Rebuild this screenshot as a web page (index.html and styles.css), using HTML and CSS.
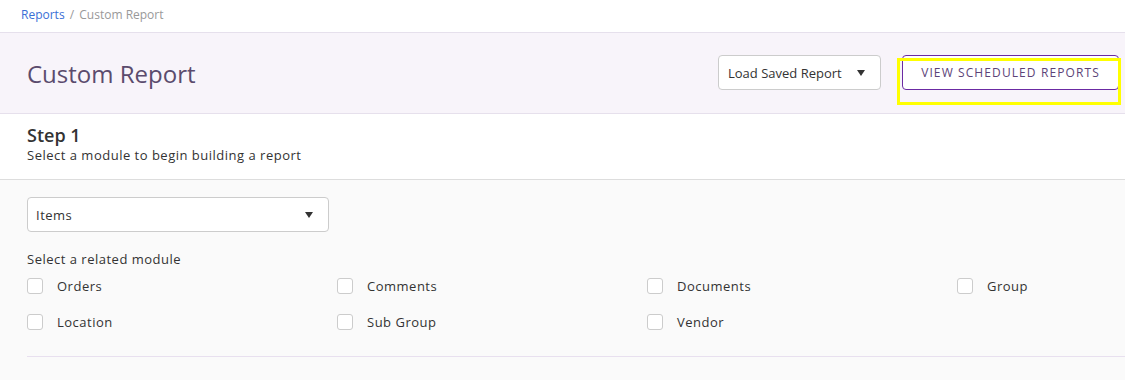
FILE: index.html
```html
<!DOCTYPE html>
<html lang="en">
<head>
    <meta charset="UTF-8">
    <title>Custom Report</title>
    <link rel="stylesheet" href="styles.css">
</head>
<body>
    <div class="breadcrumb">
        <a href="#">Reports</a>
        <span class="sep">/</span>
        <span class="current">Custom Report</span>
    </div>

    <div class="page-header">
        <h1>Custom Report</h1>
        <div class="header-actions">
            <div class="select select-saved">
                <span>Load Saved Report</span>
                <span class="caret"></span>
            </div>
            <div class="highlight-wrap">
                <button class="btn-outline">VIEW SCHEDULED REPORTS</button>
                <div class="highlight"></div>
            </div>
        </div>
    </div>

    <div class="step-head">
        <h2>Step 1</h2>
        <p>Select a module to begin building a report</p>
    </div>

    <div class="step-body">
        <div class="select select-module">
            <span>Items</span>
            <span class="caret"></span>
        </div>

        <div class="related-label">Select a related module</div>
        <div class="modules">
            <label class="check"><span class="box"></span>Orders</label>
            <label class="check"><span class="box"></span>Comments</label>
            <label class="check"><span class="box"></span>Documents</label>
            <label class="check"><span class="box"></span>Group</label>
            <label class="check"><span class="box"></span>Location</label>
            <label class="check"><span class="box"></span>Sub Group</label>
            <label class="check"><span class="box"></span>Vendor</label>
        </div>
        <div class="divider"></div>
    </div>
</body>
</html>
```

FILE: styles.css
```css
body {
    margin: 0;
    font-family: "Open Sans", sans-serif;
    color: #333;
    background-color: #fafafa;
}
.breadcrumb {
    height: 32px;
    padding-left: 21px;
    font-size: 12px;
    line-height: 29px;
    background-color: #fff;
}
.breadcrumb a {
    color: #3a6fd6;
    text-decoration: none;
}
.breadcrumb .sep {
    color: #999;
    margin: 0 2px;
}
.breadcrumb .current {
    color: #999;
}
.page-header {
    height: 80px;
    display: flex;
    align-items: center;
    justify-content: space-between;
    padding: 0 6px 0 27px;
    background-color: #f8f4fa;
    border-top: 1px solid #e6e0ec;
    border-bottom: 1px solid #e6e0ec;
}
.page-header h1 {
    margin: 0;
    font-size: 24px;
    font-weight: 400;
    color: #5b4b6d;
    padding-top: 1px;
}
.header-actions {
    display: flex;
    align-items: center;
    gap: 21px;
    margin-top: -1px;
}
.select {
    display: flex;
    align-items: center;
    justify-content: space-between;
    height: 35px;
    box-sizing: border-box;
    border: 1px solid #ccc;
    border-radius: 4px;
    background-color: #fff;
    font-size: 13px;
    color: #333;
}
.caret {
    width: 0;
    height: 0;
    border-left: 4.5px solid transparent;
    border-right: 4.5px solid transparent;
    border-top: 6px solid #333;
}
.select-saved {
    width: 163px;
    padding: 0 15px 0 9px;
}
.highlight-wrap {
    position: relative;
}
.btn-outline {
    display: block;
    width: 217px;
    height: 35px;
    border: 1.5px solid #6b2aa3;
    border-radius: 4px;
    background-color: #fff;
    color: #5c4378;
    font-family: "Open Sans", sans-serif;
    font-size: 12px;
    letter-spacing: 1.1px;
}
.highlight {
    position: absolute;
    left: -5px;
    top: 3px;
    width: 218px;
    height: 41px;
    border: 3px solid #ffff00;
}
.step-head {
    height: 66px;
    padding: 9px 27px 0;
    box-sizing: border-box;
    background-color: #fff;
    border-bottom: 1px solid #ddd;
}
.step-head h2 {
    margin: 0;
    font-size: 18px;
    font-weight: 600;
    line-height: 24px;
    color: #333;
}
.step-head p {
    margin: 0;
    font-size: 13px;
    line-height: 17px;
    letter-spacing: 0.5px;
    color: #333;
}
.step-body {
    padding: 17px 0 0 27px;
}
.select-module {
    width: 302px;
    padding: 0 15px 0 8px;
    letter-spacing: 0.5px;
}
.related-label {
    margin-top: 17px;
    font-size: 13px;
    line-height: 20px;
    letter-spacing: 0.5px;
}
.modules {
    display: grid;
    grid-template-columns: repeat(3, 310px) 1fr;
    row-gap: 16px;
    margin-top: 7px;
}
.check {
    display: flex;
    align-items: center;
    gap: 14px;
    height: 20px;
    font-size: 13px;
    letter-spacing: 0.5px;
    color: #333;
}
.box {
    width: 16px;
    height: 16px;
    box-sizing: border-box;
    border: 1px solid #ccc;
    border-radius: 3px;
    background-color: #fff;
}
.divider {
    margin-top: 24px;
    height: 1px;
    background-color: #e8e0ef;
}
```
